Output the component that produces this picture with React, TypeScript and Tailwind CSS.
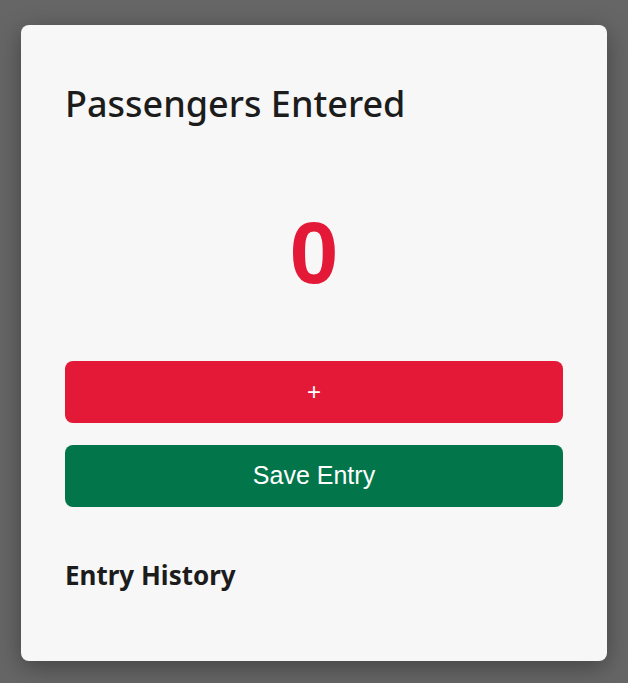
export default function App() {
  const count = 0;

  return (
    <div className="min-h-screen bg-[#666666] flex justify-center pt-[25px] pb-[22px]">
      <div className="w-[586px] h-[636px] bg-[#f7f7f7] rounded-lg shadow-[0_6px_24px_rgba(0,0,0,0.35)] px-[44px] pt-[61px]">
        <h1 className="font-['Noto_Sans',sans-serif] text-[36px] leading-[1] font-medium text-[#1c1c1c] mb-0">
          Passengers Entered
        </h1>

        {/* Counter */}
        <div className="mt-[87px] text-center font-['Liberation_Sans',Arial,sans-serif] font-bold text-[88px] leading-none text-[#e31937]">
          {count}
        </div>

        {/* Actions */}
        <div className="mt-[64px] flex flex-col gap-[22px]">
          <button className="h-[62px] w-full rounded-lg bg-[#e31937] text-white font-['Liberation_Sans',Arial,sans-serif] text-[24px]">
            +
          </button>
          <button className="h-[62px] w-full rounded-lg bg-[#02764a] text-white font-['Liberation_Sans',Arial,sans-serif] text-[25px]">
            Save Entry
          </button>
        </div>

        <h2 className="mt-[55px] font-['Noto_Sans',sans-serif] text-[26px] leading-none font-bold text-[#1c1c1c]">
          Entry History
        </h2>
      </div>
    </div>
  );
}
